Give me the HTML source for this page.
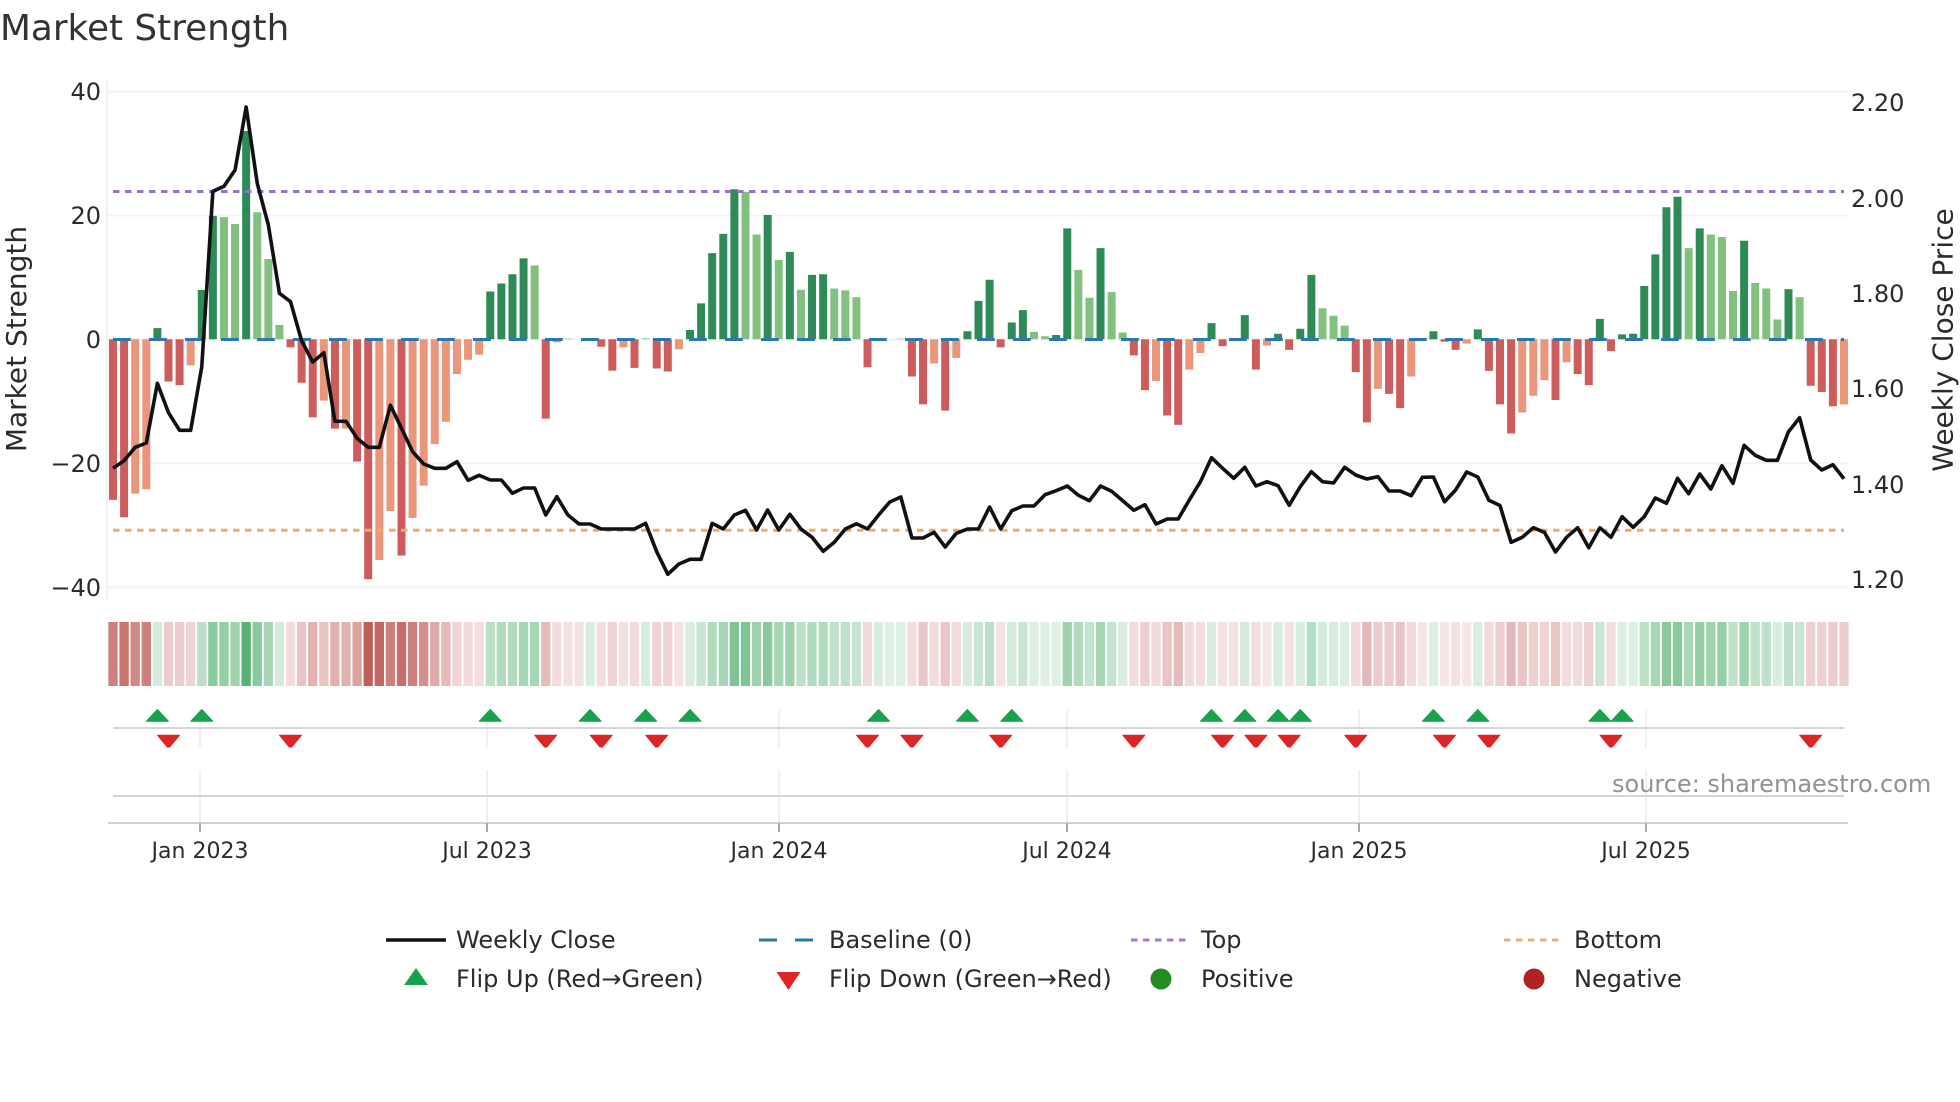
<!DOCTYPE html>
<html><head><meta charset="utf-8"><title>Market Strength</title>
<style>
html,body{margin:0;padding:0;background:#fff;width:1960px;height:1102px;overflow:hidden}
svg{display:block}
text{font-family:"DejaVu Sans",sans-serif;fill:#2b2b2b}
</style></head><body>
<svg width="1960" height="1102" viewBox="0 0 1960 1102" xmlns="http://www.w3.org/2000/svg">
<defs>
<path id="u" d="M-11 721.2L0 709.5L11 721.2Z" fill="#16a34a" stroke="#16a34a" stroke-width="1" stroke-linejoin="round"/>
<path id="d" d="M-11 735.2L11 735.2L1.2 747L-1.2 747Z" fill="#dc2626" stroke="#dc2626" stroke-width="1" stroke-linejoin="round"/>
</defs>
<text x="0" y="40" font-size="35.8" style="fill:#333">Market Strength</text>

<!-- grid -->
<g stroke="#f2f3f5" stroke-width="2" fill="none">
<path d="M108 91.5H1848M108 215.5H1848M108 339.5H1848M108 463.3H1848M108 587.3H1848"/>
<path d="M107 80V600" stroke="#f0f1f3"/>
</g>

<!-- bars -->
<g transform="translate(113,339.3) scale(11.096,6.2)" stroke-width=".72" fill="none">
<path stroke="#2e8b57" d="M4 0V-1.8M8 0V-7.95M9 0V-19.9M12 0V-33.6M34 0V-7.7M35 0V-9M36 0V-10.5M37 0V-13.06M52 0V-1.5M53 0V-5.8M54 0V-13.9M55 0V-17M56 0V-24.2M59 0V-20.05M61 0V-14.1M63 0V-10.4M64 0V-10.5M77 0V-1.3M78 0V-6.2M79 0V-9.6M81 0V-2.7M82 0V-4.7M85 0V-.7M86 0V-17.9M89 0V-14.7M99 0V-2.6M102 0V-3.9M105 0V-.9M107 0V-1.7M108 0V-10.4M119 0V-1.3M123 0V-1.6M134 0V-3.3M136 0V-.8M137 0V-.9M138 0V-8.6M139 0V-13.7M140 0V-21.3M141 0V-23M143 0V-17.9M147 0V-15.9M151 0V-8.1"/>
<path stroke="#81c07f" d="M10 0V-19.7M11 0V-18.6M13 0V-20.5M14 0V-12.95M15 0V-2.3M38 0V-11.9M41 0V-.1M48 0V-.15M57 0V-23.8M58 0V-16.9M60 0V-12.8M62 0V-8M65 0V-8.2M66 0V-7.9M67 0V-6.8M71 0V-.1M83 0V-1.2M84 0V-.5M87 0V-11.2M88 0V-6.7M90 0V-7.6M91 0V-1.1M109 0V-5M110 0V-3.8M111 0V-2.2M142 0V-14.7M144 0V-16.9M145 0V-16.5M146 0V-7.8M148 0V-9.1M149 0V-8.2M150 0V-3.2M152 0V-6.8"/>
<path stroke="#cd5c5c" d="M0 0V25.9M1 0V28.7M5 0V6.8M6 0V7.4M16 0V1.3M17 0V7M18 0V12.6M20 0V14.4M22 0V19.7M23 0V38.7M26 0V34.9M39 0V12.8M44 0V1.2M45 0V5.05M47 0V4.6M49 0V4.7M50 0V5.2M68 0V4.5M72 0V6M73 0V10.5M75 0V11.5M80 0V1.3M92 0V2.6M93 0V8.2M95 0V12.3M96 0V13.8M100 0V1.1M103 0V4.9M106 0V1.7M112 0V5.3M113 0V13.4M115 0V8.8M116 0V11.1M120 0V.4M121 0V1.7M124 0V5.1M125 0V10.5M126 0V15.2M130 0V9.8M132 0V5.6M133 0V7.4M135 0V1.9M153 0V7.5M154 0V8.5M155 0V10.8"/>
<path stroke="#e9967a" d="M2 0V24.9M3 0V24.2M7 0V4.2M19 0V9.9M21 0V14.4M24 0V35.6M25 0V27.7M27 0V28.8M28 0V23.6M29 0V16.9M30 0V13.3M31 0V5.6M32 0V3.3M33 0V2.5M40 0V.5M46 0V1.3M51 0V1.6M74 0V3.9M76 0V3M94 0V6.7M97 0V4.9M98 0V2.2M104 0V1M114 0V8M117 0V6M122 0V.7M127 0V11.8M128 0V9.1M129 0V6.6M131 0V3.7M156 0V10.5"/>
</g>

<!-- baseline / top / bottom -->
<path d="M113 339.5H1844" stroke="#2a78b0" stroke-width="3" stroke-dasharray="17.8 18.2" fill="none"/>
<path d="M113 191.5H1844" stroke="#9b6dd0" stroke-width="3" stroke-dasharray="6.5 5.5" fill="none"/>
<path d="M113 530.3H1844" stroke="#eea96e" stroke-width="3" stroke-dasharray="6.5 5.5" fill="none"/>

<!-- weekly close line -->
<g transform="translate(113,0) scale(11.096,1)">
<polyline fill="none" stroke="#111" stroke-width="3.6" stroke-linejoin="round" vector-effect="non-scaling-stroke" points="0,468.3 1,460.7 2,447.3 3,443 4,383.3 5,412.7 6,430.3 7,430.3 8,366.7 9,191.3 10,186.3 11,170 12,107 13,183.3 14,225 15,293.3 16,301.7 17,340.7 18,362 19,352.7 20,421.3 21,421.3 22,438.3 23,447.3 24,447.3 25,405.3 26,428.3 27,451.7 28,464 29,468.3 30,468.3 31,461.7 32,480.3 33,475.3 34,480 35,480 36,493.3 37,488 38,488 39,515 40,496.7 41,515 42,524 43,524 44,529 45,529 46,529 47,529 48,523.3 49,551.7 50,574.3 51,564 52,559.3 53,559.3 54,523.3 55,529 56,515 57,510.3 58,530 59,510 60,530 61,514.3 62,529 63,537.3 64,551.3 65,542.3 66,529 67,523.7 68,529 69,515 70,502 71,497 72,538 73,538 74,532.3 75,547 76,533.3 77,529 78,529 79,507 80,529 81,510.7 82,506 83,506 84,494.7 85,490.7 86,486 87,495.3 88,500.7 89,486 90,491.3 91,500.7 92,510.3 93,504.7 94,524 95,519 96,519 97,500 98,481.7 99,457.7 100,468.3 101,478.3 102,467.3 103,486 104,481.7 105,485.7 106,505.3 107,486.7 108,471.7 109,481.7 110,483 111,467.3 112,475 113,479 114,476.7 115,491 116,491 117,495.7 118,477.3 119,477 120,501.7 121,490 122,472 123,477 124,500.3 125,505.5 126,542.3 127,537.3 128,527.7 129,532.3 130,552 131,537.3 132,527.7 133,547.7 134,527.7 135,537.3 136,516.7 137,527.3 138,516.7 139,498 140,503.3 141,478.3 142,493.7 143,474 144,489 145,465.7 146,483.3 147,445.3 148,455.3 149,460.3 150,460.3 151,431.7 152,417.7 153,460 154,470 155,464.7 156,478.7"/>
</g>

<!-- heat strip -->
<g transform="translate(113,622) scale(11.096,64)" stroke-width=".84" fill="none">
<g stroke="#be5550">
<path stroke-opacity=".75" d="M0 0V1"/><path stroke-opacity=".82" d="M1 0V1"/><path stroke-opacity=".7" d="M2 0V1"/><path stroke-opacity=".75" d="M3 0V1"/>
<path stroke-opacity=".3" d="M5 0V1M6 0V1"/><path stroke-opacity=".25" d="M7 0V1M31 0V1"/>
<path stroke-opacity=".2" d="M16 0V1M33 0V1M40 0V1M44 0V1M72 0V1M74 0V1M76 0V1M92 0V1M98 0V1M103 0V1M131 0V1M135 0V1"/>
<path stroke-opacity=".35" d="M17 0V1M19 0V1M95 0V1M116 0V1M127 0V1"/><path stroke-opacity=".45" d="M18 0V1M20 0V1M21 0V1"/>
<path stroke-opacity=".55" d="M22 0V1"/><path stroke-opacity=".95" d="M23 0V1"/><path stroke-opacity=".9" d="M24 0V1"/><path stroke-opacity=".75" d="M25 0V1M27 0V1"/>
<path stroke-opacity=".85" d="M26 0V1"/><path stroke-opacity=".65" d="M28 0V1"/><path stroke-opacity=".5" d="M29 0V1"/><path stroke-opacity=".4" d="M30 0V1M39 0V1M96 0V1"/>
<path stroke-opacity=".22" d="M32 0V1M47 0V1M68 0V1M94 0V1M97 0V1M112 0V1M117 0V1M124 0V1M132 0V1"/>
<path stroke-opacity=".18" d="M41 0V1M46 0V1"/><path stroke-opacity=".17" d="M42 0V1M51 0V1M80 0V1M100 0V1M101 0V1M106 0V1M121 0V1"/>
<path stroke-opacity=".25" d="M45 0V1M49 0V1M50 0V1M129 0V1"/>
<path stroke-opacity=".32" d="M73 0V1"/><path stroke-opacity=".33" d="M75 0V1M130 0V1"/>
<path stroke-opacity=".28" d="M93 0V1M125 0V1M128 0V1"/><path stroke-opacity=".15" d="M104 0V1M118 0V1M120 0V1"/><path stroke-opacity=".14" d="M122 0V1"/>
<path stroke-opacity=".42" d="M113 0V1M126 0V1"/><path stroke-opacity=".3" d="M114 0V1M115 0V1M155 0V1M156 0V1"/><path stroke-opacity=".27" d="M133 0V1M153 0V1M154 0V1"/>
</g>
<g stroke="#3ca55a">
<path stroke-opacity=".2" d="M43 0V1M48 0V1M52 0V1M69 0V1M77 0V1M91 0V1M99 0V1M105 0V1M107 0V1M110 0V1M123 0V1M150 0V1"/>
<path stroke-opacity=".22" d="M4 0V1M15 0V1M81 0V1M102 0V1M109 0V1"/>
<path stroke-opacity=".35" d="M8 0V1M34 0V1M62 0V1M79 0V1M138 0V1"/>
<path stroke-opacity=".6" d="M9 0V1M13 0V1M59 0V1M140 0V1M141 0V1"/><path stroke-opacity=".55" d="M10 0V1M143 0V1M145 0V1"/>
<path stroke-opacity=".5" d="M11 0V1M58 0V1M61 0V1M86 0V1M144 0V1M147 0V1"/><path stroke-opacity=".85" d="M12 0V1"/>
<path stroke-opacity=".45" d="M14 0V1M37 0V1M38 0V1M55 0V1M60 0V1M89 0V1M139 0V1M142 0V1"/>
<path stroke-opacity=".4" d="M35 0V1M36 0V1M54 0V1M63 0V1M64 0V1M87 0V1"/>
<path stroke-opacity=".28" d="M53 0V1M78 0V1M82 0V1M134 0V1M152 0V1"/><path stroke-opacity=".65" d="M56 0V1M57 0V1"/>
<path stroke-opacity=".33" d="M65 0V1M66 0V1M146 0V1M148 0V1M149 0V1M151 0V1"/><path stroke-opacity=".3" d="M67 0V1M88 0V1M90 0V1"/>
<path stroke-opacity=".17" d="M70 0V1M71 0V1M84 0V1M85 0V1"/><path stroke-opacity=".18" d="M83 0V1M111 0V1M119 0V1M136 0V1M137 0V1"/>
<path stroke-opacity=".38" d="M108 0V1"/>
</g>
</g>

<!-- lower panels -->
<g fill="none">
<path stroke="#eff0f3" stroke-width="2" d="M200 710V748M200 770V823M487 710V748M487 770V823M779 710V748M779 770V823M1067 710V748M1067 770V823M1359 710V748M1359 770V823M1646 710V748M1646 770V823"/>
<path stroke="#d3d5da" stroke-width="2" d="M113 728H1844M113 796H1844"/>
<path stroke="#cfd1d5" stroke-width="2" d="M108 823H1848"/>
<path stroke="#a8a8a8" stroke-width="2" d="M200 823V832M487 823V832M779 823V832M1067 823V832M1359 823V832M1646 823V832"/>
</g>

<!-- markers -->
<use href="#u" x="157.4"/><use href="#u" x="201.8"/><use href="#u" x="490.3"/><use href="#u" x="590.1"/><use href="#u" x="645.6"/><use href="#u" x="690"/><use href="#u" x="878.6"/><use href="#u" x="967.4"/><use href="#u" x="1011.8"/><use href="#u" x="1211.5"/><use href="#u" x="1244.8"/><use href="#u" x="1278.1"/><use href="#u" x="1300.3"/><use href="#u" x="1433.4"/><use href="#u" x="1477.8"/><use href="#u" x="1599.9"/><use href="#u" x="1622.1"/>
<use href="#d" x="168.5"/><use href="#d" x="290.5"/><use href="#d" x="545.7"/><use href="#d" x="601.2"/><use href="#d" x="656.7"/><use href="#d" x="867.5"/><use href="#d" x="911.9"/><use href="#d" x="1000.7"/><use href="#d" x="1133.8"/><use href="#d" x="1222.6"/><use href="#d" x="1255.9"/><use href="#d" x="1289.2"/><use href="#d" x="1355.8"/><use href="#d" x="1444.5"/><use href="#d" x="1488.9"/><use href="#d" x="1611"/><use href="#d" x="1810.7"/>

<!-- axis labels -->
<g font-size="24" text-anchor="end">
<text x="101" y="100">40</text>
<text x="101" y="224">20</text>
<text x="101" y="348">0</text>
<text x="101" y="472">−20</text>
<text x="101" y="596">−40</text>
</g>
<g font-size="24">
<text x="1851" y="111">2.20</text>
<text x="1851" y="207">2.00</text>
<text x="1851" y="302">1.80</text>
<text x="1851" y="397">1.60</text>
<text x="1851" y="493">1.40</text>
<text x="1851" y="588">1.20</text>
</g>
<text transform="translate(26,339) rotate(-90)" font-size="28" text-anchor="middle">Market Strength</text>
<text transform="translate(1952.5,340) rotate(-90)" font-size="28" text-anchor="middle">Weekly Close Price</text>
<g font-size="22" text-anchor="middle">
<text x="200" y="858">Jan 2023</text>
<text x="487" y="858">Jul 2023</text>
<text x="779" y="858">Jan 2024</text>
<text x="1067" y="858">Jul 2024</text>
<text x="1359" y="858">Jan 2025</text>
<text x="1646" y="858">Jul 2025</text>
</g>
<text x="1612" y="792" font-size="24" style="fill:#929292">source: sharemaestro.com</text>

<!-- legend -->
<g fill="none">
<path d="M386 940H446" stroke="#111" stroke-width="3.600"/>
<path d="M759 940H813" stroke="#2a78b0" stroke-width="3" stroke-dasharray="18 18"/>
<path d="M1131 940H1186" stroke="#a678dc" stroke-width="3" stroke-dasharray="6.5 5.5"/>
<path d="M1504 940H1559" stroke="#f0ac78" stroke-width="3" stroke-dasharray="6.5 5.5"/>
</g>
<path d="M404 985L416 968L428 985Z" fill="#16a34a"/>
<path d="M776.500 972L800.500 972L788.500 990Z" fill="#dc2626"/>
<circle cx="1161" cy="979" r="10.500" fill="#228b22"/>
<circle cx="1534" cy="979" r="10.500" fill="#b22222"/>
<g font-size="24" style="fill:#333">
<text x="456" y="948">Weekly Close</text>
<text x="829" y="948">Baseline (0)</text>
<text x="1201" y="948">Top</text>
<text x="1574" y="948">Bottom</text>
<text x="456" y="987">Flip Up (Red→Green)</text>
<text x="829" y="987">Flip Down (Green→Red)</text>
<text x="1201" y="987">Positive</text>
<text x="1574" y="987">Negative</text>
</g>
</svg>
</body></html>
